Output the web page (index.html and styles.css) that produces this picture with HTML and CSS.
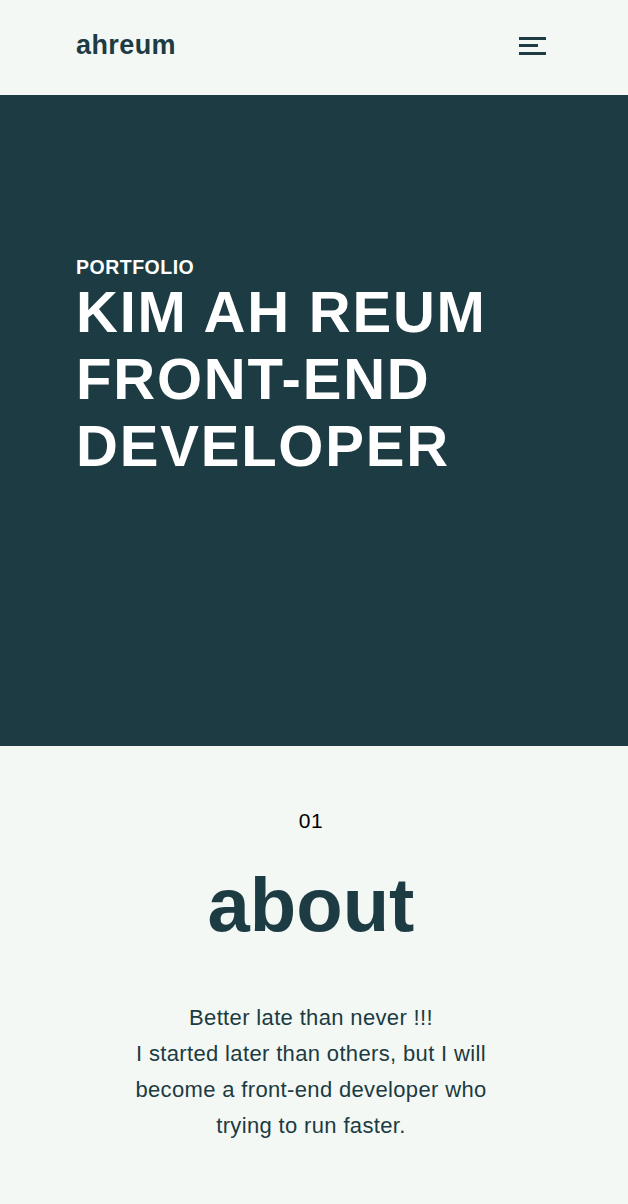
FILE: index.html
```html
<!DOCTYPE html>
<html lang="en">
<head>
<meta charset="utf-8">
<title>ahreum</title>
<link rel="stylesheet" href="styles.css">
</head>
<body>
<header class="header">
  <div class="container header-inner">
    <a class="logo" href="#">ahreum</a>
    <button class="menu-btn" aria-label="menu">
      <span class="bar"></span>
      <span class="bar bar-short"></span>
      <span class="bar"></span>
    </button>
  </div>
</header>
<section class="hero">
  <div class="container">
    <p class="hero-label">PORTFOLIO</p>
    <h1 class="hero-title">KIM AH REUM<br>FRONT-END<br>DEVELOPER</h1>
  </div>
</section>
<section class="about">
  <div class="container about-inner">
    <p class="section-num">01</p>
    <h2 class="section-title">about</h2>
    <p class="about-text">Better late than never !!!<br>I started later than others, but I will become a front-end developer who trying to run faster.</p>
  </div>
</section>
</body>
</html>
```

FILE: styles.css
```css
* { box-sizing: border-box; }
html, body { margin: 0; padding: 0; }
body {
  font-family: "Liberation Sans", Arial, sans-serif;
  background: #f3f8f4;
  color: #1c3b42;
}
.container {
  padding: 0 82px 0 76px;
}
.header {
  height: 95px;
  background: #f3f8f4;
}
.header-inner {
  height: 100%;
  padding-bottom: 4px;
  display: flex;
  align-items: center;
  justify-content: space-between;
}
.logo {
  font-size: 27px;
  font-weight: 700;
  letter-spacing: 0.4px;
  color: #1c3b42;
  text-decoration: none;
}
.menu-btn {
  width: 27px;
  height: 18px;
  padding: 0;
  border: 0;
  background: none;
  display: flex;
  flex-direction: column;
  justify-content: space-between;
  align-items: flex-start;
  cursor: pointer;
}
.bar {
  display: block;
  width: 27px;
  height: 3px;
  background: #1c3b42;
}
.bar-short { width: 19px; }
.hero {
  background: #1c3b42;
  height: 651px;
  padding-top: 161px;
  color: #fff;
}
.hero-label {
  margin: 0;
  font-size: 19.5px;
  font-weight: 700;
  letter-spacing: 0.5px;
  line-height: 22px;
}
.hero-title {
  margin: 0;
  font-size: 58px;
  letter-spacing: 1.8px;
  line-height: 67px;
  font-weight: 700;
}
.about {
  padding: 60px 0 60px;
}
.about-inner {
  text-align: center;
}
.section-num {
  margin: 0;
  font-size: 21px;
  letter-spacing: 0.6px;
  color: #000;
  line-height: 30px;
}
.section-title {
  margin: 24px 0 0;
  font-size: 76px;
  line-height: 90px;
  font-weight: 700;
  color: #1c3b42;
}
.about-text {
  margin: 50px auto 0;
  max-width: 380px;
  font-size: 22px;
  letter-spacing: 0.35px;
  line-height: 36px;
  color: #1c3b42;
}
```
